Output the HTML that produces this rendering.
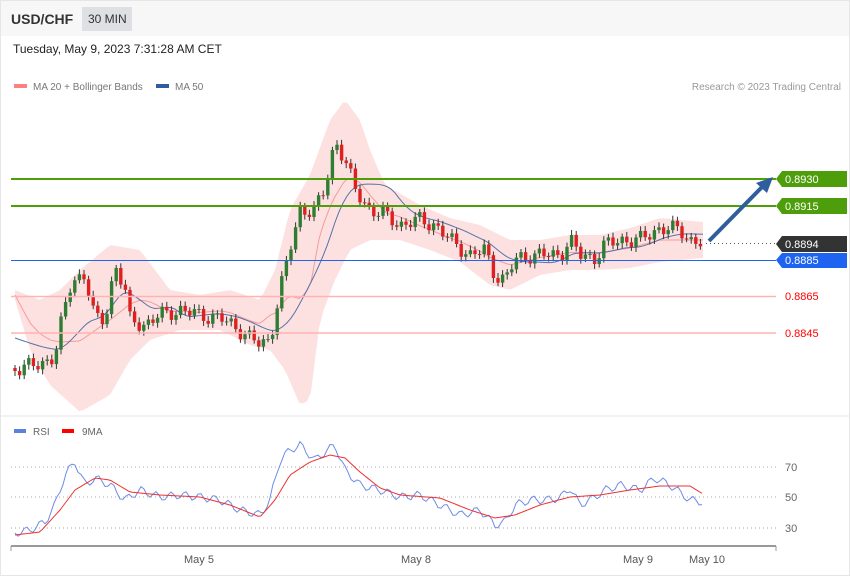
<!DOCTYPE html>
<html><head><meta charset="utf-8"><style>
body{margin:0;width:850px;height:576px;overflow:hidden;background:#fff;font-family:"Liberation Sans",sans-serif}
</style></head><body>
<svg id="s" width="850" height="576" xmlns="http://www.w3.org/2000/svg" font-family="Liberation Sans, sans-serif">
<rect x="0.5" y="0.5" width="849" height="575" fill="#fff" stroke="#e6e6e6"/>
<rect x="1" y="1" width="848" height="35" fill="#f7f7f7"/>
<text x="11" y="24" font-size="14" font-weight="bold" fill="#333">USD/CHF</text>
<rect x="82" y="7" width="50" height="24" fill="#dfe0e3"/>
<text x="88" y="23" font-size="12" fill="#333">30 MIN</text>
<text x="13" y="53" font-size="12" fill="#222">Tuesday, May 9, 2023 7:31:28 AM CET</text>
<rect x="14" y="84" width="13" height="4" fill="#ff8080"/>
<text x="33" y="90" font-size="10" fill="#777">MA 20 + Bollinger Bands</text>
<rect x="156" y="84" width="13" height="4" fill="#2e5e9e"/>
<text x="175" y="90" font-size="10" fill="#777">MA 50</text>
<text x="841" y="90" font-size="10" fill="#999" text-anchor="end">Research © 2023 Trading Central</text>
<path id="band" fill="#fde1e1"/>
<path id="ma20" fill="none" stroke="#f59a9a" stroke-width="1"/>
<path id="ma50" fill="none" stroke="#5572a8" stroke-width="1"/>
<g id="candles"></g>
<line x1="11" y1="179" x2="776" y2="179" stroke="#4d9e0a" stroke-width="2"/>
<line x1="11" y1="206" x2="776" y2="206" stroke="#4d9e0a" stroke-width="2"/>
<line x1="11" y1="260.5" x2="776" y2="260.5" stroke="#1f64f0" stroke-width="1"/>
<line x1="11" y1="296.5" x2="776" y2="296.5" stroke="#ffb3b3" stroke-width="1.5"/>
<line x1="11" y1="333" x2="776" y2="333" stroke="#ffb3b3" stroke-width="1.5"/>
<line x1="706" y1="243.5" x2="776" y2="243.5" stroke="#555" stroke-dasharray="1,3"/>
<line x1="709" y1="241" x2="763" y2="186" stroke="#2e5e9e" stroke-width="4"/>
<polygon points="773,177 756,183 767,193" fill="#2e5e9e"/>
<polygon points="776,179 782,171 847,171 847,187 782,187" fill="#4d9e0a"/>
<text x="785" y="183" font-size="11" fill="#fff">0.8930</text>
<polygon points="776,206 782,198 847,198 847,214 782,214" fill="#4d9e0a"/>
<text x="785" y="210" font-size="11" fill="#fff">0.8915</text>
<polygon points="776,244 782,236 847,236 847,252 782,252" fill="#333"/>
<text x="785" y="248" font-size="11" fill="#fff">0.8894</text>
<polygon points="776,260 782,253 847,253 847,268 782,268" fill="#1f64f0"/>
<text x="785" y="264" font-size="11" fill="#fff">0.8885</text>
<text x="785" y="300" font-size="11" fill="#f00">0.8865</text>
<text x="785" y="337" font-size="11" fill="#f00">0.8845</text>
<line x1="1" y1="416" x2="849" y2="416" stroke="#e6e6e6"/>
<rect x="14" y="429" width="12" height="4" fill="#5c7fe0"/>
<text x="33" y="435" font-size="10" fill="#666">RSI</text>
<rect x="62" y="429" width="12" height="4" fill="#f00"/>
<text x="82" y="435" font-size="10" fill="#666">9MA</text>
<g stroke="#aaa" stroke-dasharray="1,3">
<line x1="11" y1="467" x2="776" y2="467"/><line x1="11" y1="497" x2="776" y2="497"/><line x1="11" y1="528" x2="776" y2="528"/></g>
<text x="785" y="471" font-size="11" fill="#666">70</text>
<text x="785" y="501" font-size="11" fill="#666">50</text>
<text x="785" y="532" font-size="11" fill="#666">30</text>
<path id="rsi" fill="none" stroke="#6d8ce6" stroke-width="1"/>
<path id="rma" fill="none" stroke="#f03030" stroke-width="1"/>
<line x1="11" y1="546" x2="776" y2="546" stroke="#999" stroke-width="2"/>
<g stroke="#999"><line x1="11" y1="546" x2="11" y2="551"/><line x1="776" y1="546" x2="776" y2="551"/></g>
<g font-size="11" fill="#555" text-anchor="middle">
<text x="199" y="563">May 5</text><text x="416" y="563">May 8</text><text x="638" y="563">May 9</text><text x="707" y="563">May 10</text></g>
</svg>
<script>
function interp(k,x){for(let i=1;i<k.length;i++){if(x<=k[i][0]){const a=k[i-1],b=k[i];return a[1]+(b[1]-a[1])*(x-a[0])/(b[0]-a[0]);}}return k[k.length-1][1];}
const K=[[15,368],[40,365],[55,355],[62,320],[72,280],[85,275],[95,320],[105,320],[115,265],[125,290],[130,320],[145,325],[160,315],[180,310],[200,315],[220,318],[240,330],[260,345],[270,340],[280,290],[290,250],[300,210],[315,210],[325,190],[335,140],[345,160],[355,190],[370,210],[385,215],[400,225],[420,220],[435,225],[450,240],[470,255],[485,250],[495,275],[505,280],[515,260],[530,255],[545,255],[560,255],[570,240],[580,255],[595,258],[605,245],[620,240],[640,240],[660,228],[680,230],[690,240],[703,243]];
const UP=[[15,290],[40,300],[60,290],[80,270],[110,245],[140,250],[170,290],[200,295],[230,290],[260,300],[275,270],[290,210],[310,175],[330,120],[345,100],[360,120],[370,150],[385,185],[420,205],[450,218],[480,225],[510,240],[540,240],[570,235],[600,235],[630,228],[660,218],[703,222]];
const LO=[[15,300],[30,350],[50,385],[80,412],[110,395],[130,360],[150,340],[180,330],[220,330],[250,345],[270,350],[285,370],[300,405],[310,400],[320,320],[335,280],[350,250],[370,240],[400,240],[430,250],[460,262],[490,285],[510,290],[540,275],[570,270],[600,270],[630,268],[660,262],[703,258]];
let up='M15 '+interp(UP,15),lo='';
for(let x=15;x<=703;x+=4)up+=' L'+x+' '+interp(UP,x);
for(let x=703;x>=15;x-=4)lo+=' L'+x+' '+interp(LO,x);
document.getElementById('band').setAttribute('d',up+lo+'Z');
let m20='',m50='';
for(let x=15;x<=703;x+=4){const u=interp(UP,x),l=interp(LO,x);m20+=(x==15?'M':'L')+x+' '+((u+l)/2)+' ';
let s=0,n=0;for(let j=x-60;j<=x;j+=4){s+=interp(K,Math.max(15,j));n++;}m50+=(x==15?'M':'L')+x+' '+(s/n+(x<100?-30:0)*(1-(x-15)/85))+' ';}
document.getElementById('ma20').setAttribute('d',m20);
document.getElementById('ma50').setAttribute('d',m50);
let g='',prev=interp(K,15);
for(let x=15,i=0;x<=703;x+=4.6,i++){let c=interp(K,x)+6*Math.sin(i*1.7)+3*Math.cos(i*0.9);const o=prev;const col=c<o?'#2e7d32':'#e02020';
const t=Math.min(o,c),b=Math.max(o,c);g+=`<line x1="${x}" x2="${x}" y1="${t-3-2*Math.abs(Math.sin(i))}" y2="${b+3+2*Math.abs(Math.cos(i))}" stroke="#333" stroke-width="1"/><rect x="${x-1.7}" y="${t}" width="3.4" height="${Math.max(1,b-t)}" fill="${col}"/>`;prev=c;}
document.getElementById('candles').innerHTML=g;
const R=[[15,533],[30,530],[45,522],[55,505],[65,475],[75,462],[85,485],[95,478],[110,485],[125,500],[140,490],[160,497],[180,495],[200,497],[220,500],[240,510],[260,515],[270,500],[280,460],[290,450],[300,445],[315,460],[325,452],[335,445],[345,470],[360,485],[380,490],[400,497],[420,495],[440,505],[460,515],[480,510],[495,525],[505,522],[515,505],[530,500],[545,500],[560,498],[570,488],[580,505],[595,497],[605,490],[620,485],[640,490],[655,478],[670,485],[690,500],[703,502]];
const M=[[15,535],[40,532],[60,510],[75,490],[95,478],[110,480],[130,492],[160,495],[200,497],[230,505],[260,517],[275,500],[290,475],[310,462],[330,455],[345,458],[360,472],[380,488],[400,495],[440,498],[470,510],[495,518],[515,515],[540,505],[570,497],[600,495],[630,490],[660,486],[690,486],[703,494]];
let r='',rm='';for(let x=15,i=0;x<=703;x+=3,i++){r+=(x==15?'M':'L')+x+' '+(interp(R,x)+4*Math.sin(i*1.3))+' ';rm+=(x==15?'M':'L')+x+' '+interp(M,x)+' ';}
document.getElementById('rsi').setAttribute('d',r);document.getElementById('rma').setAttribute('d',rm);
</script>
</body></html>
